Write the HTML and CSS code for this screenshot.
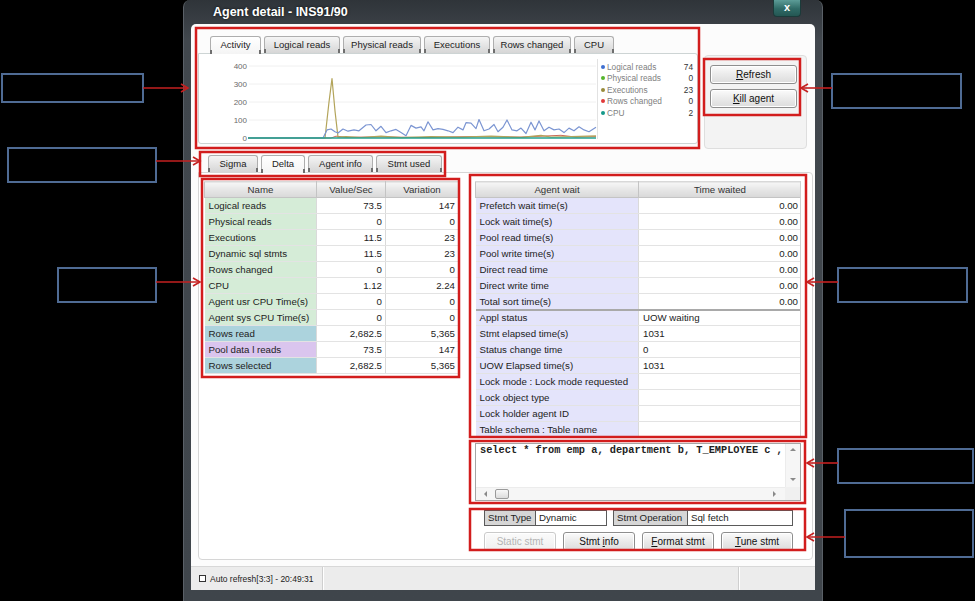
FILE: index.html
```html
<!DOCTYPE html>
<html>
<head>
<meta charset="utf-8">
<title>Agent detail</title>
<link rel="stylesheet" href="styles.css">
</head>
<body>
<div class="stage">
  <div class="window">
    <div class="titlebar">
      <span class="title">Agent detail - INS91/90</span>
      <span class="close">x</span>
    </div>
    <div class="client">
      <div class="top">
        <div class="chartgroup">
          <div class="tabs tabs-top">
            <span class="tab active w-activity">Activity</span>
            <span class="tab w-logical">Logical reads</span>
            <span class="tab w-physical">Physical reads</span>
            <span class="tab w-exec">Executions</span>
            <span class="tab w-rows">Rows changed</span>
            <span class="tab w-cpu">CPU</span>
          </div>
          <div class="chartpanel">
            <svg class="chart" width="398" height="89" viewBox="1 1 398 89">
              <g class="grid-lines">
                <line x1="51" y1="13" x2="398" y2="13"/>
                <line x1="51" y1="31" x2="398" y2="31"/>
                <line x1="51" y1="49" x2="398" y2="49"/>
                <line x1="51" y1="67" x2="398" y2="67"/>
              </g>
              <g class="axis">
                <text x="49" y="16">400</text>
                <text x="49" y="34">300</text>
                <text x="49" y="52">200</text>
                <text x="49" y="70">100</text>
                <text x="49" y="88">0</text>
              </g>
              <polyline class="s-red" points="50,85 133,85 138,83.2 148,84.3 183,83.9 223,84.5 273,83.6 323,84.1 363,82.3 378,84.1 398,83.6"/>
              <polyline class="s-olive" points="50,85 127,85 131,49 134,25.6 137,58 140,84.1 148,83.6 163,84.5 183,83.2 203,84.6 233,83.6 263,84.1 293,83.2 323,84.3 343,82.3 353,84.1 373,83.6 398,82.8"/>
              <polyline class="s-blue" points="50,85 125,85 129,76.9 133,76 137,78.7 140,80 145,76 150,78.2 156,76.9 161,77.8 168,72 173,71.5 178,77.8 183,73.3 188,79.6 193,77.8 198,76.4 203,79.6 208,82.8 213,72.4 218,75.1 223,73.8 226,77.8 230,68.8 235,76.9 240,75.6 245,76.4 250,77.8 255,79.6 260,74.2 265,76.9 268,69.7 273,70.2 278,75.6 281,66.5 286,77.8 291,76 296,71.5 300,78.7 305,74.2 309,67 314,76.9 319,77.8 323,75.1 328,80.5 333,69.2 337,76.9 341,67.9 346,77.8 351,74.2 356,76.9 361,76 366,79.6 371,75.1 376,77.8 381,73.8 386,76.9 391,78.7 398,74.2"/>
              <polyline class="s-teal" points="50,85 398,85"/>
            </svg>
            <div class="legend">
              <div class="lg"><span class="dot d-blue"></span><span class="lg-name">Logical reads</span><span class="lg-val">74</span></div>
              <div class="lg"><span class="dot d-green"></span><span class="lg-name">Physical reads</span><span class="lg-val">0</span></div>
              <div class="lg"><span class="dot d-olive"></span><span class="lg-name">Executions</span><span class="lg-val">23</span></div>
              <div class="lg"><span class="dot d-red"></span><span class="lg-name">Rows changed</span><span class="lg-val">0</span></div>
              <div class="lg"><span class="dot d-teal"></span><span class="lg-name">CPU</span><span class="lg-val">2</span></div>
            </div>
          </div>
        </div>
        <div class="btnpanel">
          <button class="btn"><u>R</u>efresh</button>
          <button class="btn"><u>K</u>ill agent</button>
        </div>
      </div>

      <div class="tabs tabs-sub">
        <span class="tab w-sigma">Sigma</span>
        <span class="tab active w-delta">Delta</span>
        <span class="tab w-agent">Agent info</span>
        <span class="tab w-stmt">Stmt used</span>
      </div>

      <div class="tabpage">
        <div class="leftcol">
          <table class="grid grid-left">
            <colgroup><col class="c1"><col class="c2"><col class="c3"></colgroup>
            <thead><tr><th>Name</th><th>Value/Sec</th><th>Variation</th></tr></thead>
            <tbody>
              <tr><td class="nm g">Logical reads</td><td class="num">73.5</td><td class="num">147</td></tr>
              <tr><td class="nm g">Physical reads</td><td class="num">0</td><td class="num">0</td></tr>
              <tr><td class="nm g">Executions</td><td class="num">11.5</td><td class="num">23</td></tr>
              <tr><td class="nm g">Dynamic sql stmts</td><td class="num">11.5</td><td class="num">23</td></tr>
              <tr><td class="nm g">Rows changed</td><td class="num">0</td><td class="num">0</td></tr>
              <tr><td class="nm g">CPU</td><td class="num">1.12</td><td class="num">2.24</td></tr>
              <tr><td class="nm g">Agent usr CPU Time(s)</td><td class="num">0</td><td class="num">0</td></tr>
              <tr><td class="nm g">Agent sys CPU Time(s)</td><td class="num">0</td><td class="num">0</td></tr>
              <tr><td class="nm b">Rows read</td><td class="num">2,682.5</td><td class="num">5,365</td></tr>
              <tr><td class="nm p">Pool data l reads</td><td class="num">73.5</td><td class="num">147</td></tr>
              <tr><td class="nm b">Rows selected</td><td class="num">2,682.5</td><td class="num">5,365</td></tr>
            </tbody>
          </table>
        </div>
        <div class="rightcol">
          <div class="waitbox">
            <table class="grid grid-right">
              <colgroup><col class="r1"><col class="r2"></colgroup>
              <thead><tr><th>Agent wait</th><th>Time waited</th></tr></thead>
              <tbody>
                <tr><td class="nm l">Prefetch wait time(s)</td><td class="num">0.00</td></tr>
                <tr><td class="nm l">Lock wait time(s)</td><td class="num">0.00</td></tr>
                <tr><td class="nm l">Pool read time(s)</td><td class="num">0.00</td></tr>
                <tr><td class="nm l">Pool write time(s)</td><td class="num">0.00</td></tr>
                <tr><td class="nm l">Direct read time</td><td class="num">0.00</td></tr>
                <tr><td class="nm l">Direct write time</td><td class="num">0.00</td></tr>
                <tr class="sep"><td class="nm l">Total sort time(s)</td><td class="num">0.00</td></tr>
                <tr><td class="nm l">Appl status</td><td class="txt">UOW waiting</td></tr>
                <tr><td class="nm l">Stmt elapsed time(s)</td><td class="txt">1031</td></tr>
                <tr><td class="nm l">Status change time</td><td class="txt">0</td></tr>
                <tr><td class="nm l">UOW Elapsed time(s)</td><td class="txt">1031</td></tr>
                <tr><td class="nm l">Lock mode : Lock mode requested</td><td class="txt"></td></tr>
                <tr><td class="nm l">Lock object type</td><td class="txt"></td></tr>
                <tr><td class="nm l">Lock holder agent ID</td><td class="txt"></td></tr>
                <tr><td class="nm l">Table schema : Table name</td><td class="txt"></td></tr>
              </tbody>
            </table>
          </div>
          <div class="sqlbox">
            <div class="sqlmain">
              <div class="sqltext">select * from emp a, department b, T_EMPLOYEE c , d</div>
              <div class="vscroll">
                <span class="arr up"></span>
                <span class="arr down"></span>
              </div>
            </div>
            <div class="hscroll">
              <span class="arr left"></span>
              <span class="thumb"></span>
              <span class="arr right"></span>
              <span class="corner"></span>
            </div>
          </div>
          <div class="stmtbox">
            <div class="fields">
              <span class="flabel">Stmt Type</span><span class="fvalue fv1">Dynamic</span>
              <span class="flabel fl2">Stmt Operation</span><span class="fvalue fv2">Sql fetch</span>
            </div>
            <div class="stmtbtns">
              <button class="btn sbtn disabled">Static stmt</button>
              <button class="btn sbtn">Stmt <u>i</u>nfo</button>
              <button class="btn sbtn"><u>F</u>ormat stmt</button>
              <button class="btn sbtn"><u>T</u>une stmt</button>
            </div>
          </div>
        </div>
      </div>

      <div class="statusbar">
        <div class="sb-cell sb-first"><span class="chk"></span>Auto refresh[3:3] - 20:49:31</div>
        <div class="sb-cell sb-mid"></div>
        <div class="sb-cell sb-last"></div>
      </div>
    </div>
  </div>

  <svg class="annot" width="975" height="601" viewBox="0 0 975 601">
    <g class="blue-box">
      <rect x="2" y="74" width="141" height="28"/>
      <rect x="8" y="148" width="148" height="34"/>
      <rect x="58" y="268" width="98" height="34"/>
      <rect x="832" y="74" width="129" height="34"/>
      <rect x="838" y="268" width="129" height="34"/>
      <rect x="838" y="449" width="135" height="34"/>
      <rect x="845" y="510" width="128" height="47"/>
    </g>
    <g class="red-box">
      <rect x="196" y="28" width="503" height="120"/>
      <rect x="704" y="59" width="96" height="56"/>
      <rect x="200" y="152" width="245" height="24"/>
      <rect x="202" y="179" width="257" height="198"/>
      <rect x="470" y="175" width="336" height="262"/>
      <rect x="470" y="441" width="335" height="62"/>
      <rect x="470" y="509" width="335" height="41"/>
    </g>
    <g class="arrow">
      <line x1="143" y1="88" x2="188" y2="88"/><polyline points="181,84 188,88 181,92"/>
      <line x1="156" y1="161" x2="200" y2="161"/><polyline points="193,157 200,161 193,165"/>
      <line x1="156" y1="282" x2="200" y2="282"/><polyline points="193,278 200,282 193,286"/>
      <line x1="832" y1="88" x2="801" y2="88"/><polyline points="808,84 801,88 808,92"/>
      <line x1="838" y1="282" x2="807" y2="282"/><polyline points="814,278 807,282 814,286"/>
      <line x1="838" y1="463" x2="807" y2="463"/><polyline points="814,459 807,463 814,467"/>
      <line x1="845" y1="537" x2="807" y2="537"/><polyline points="814,533 807,537 814,541"/>
    </g>
  </svg>
</div>
</body>
</html>
```

FILE: styles.css
```css
* { box-sizing: border-box; }

body {
  margin: 0;
  background: #000;
  font-family: "Liberation Sans", Arial, sans-serif;
  color: #222;
}

.stage {
  position: relative;
  width: 975px;
  height: 601px;
  overflow: hidden;
}

/* ---------- window frame ---------- */
.window {
  margin-left: 183px;
  width: 640px;
  height: 601px;
  padding: 0 7px;
  background: linear-gradient(#2f3439, #41474d 40px, #3f454b);
  border-left: 1px solid #5a6067;
  border-right: 1px solid #5a6067;
  border-radius: 7px 7px 0 0;
  display: flex;
  flex-direction: column;
}

.titlebar {
  height: 24px;
  display: flex;
  align-items: flex-start;
}

.title {
  margin: 5px 0 0 22px;
  color: #fff;
  font-weight: bold;
  font-size: 12.5px;
  line-height: 15px;
  text-shadow: 0 0 3px rgba(0, 0, 0, 0.8);
}

.close {
  margin-left: auto;
  margin-right: 14px;
  width: 28px;
  height: 17px;
  background: linear-gradient(#5c9c97, #2f6a66 55%, #245753);
  border: 1px solid #1b3b3a;
  border-top: none;
  border-radius: 0 0 4px 4px;
  color: #fff;
  font-weight: bold;
  font-size: 11px;
  line-height: 14px;
  text-align: center;
}

.client {
  height: 566px;
  background: #fcfcfc;
  border-radius: 5px 5px 0 0;
  display: flex;
  flex-direction: column;
}

/* ---------- top section ---------- */
.top {
  display: flex;
  align-items: flex-start;
  height: 121px;
  padding: 12px 0 0 7px;
}

.chartgroup {
  width: 500px;
  display: flex;
  flex-direction: column;
}

.tabs {
  display: flex;
  gap: 3px;
  height: 17px;
  flex: none;
  position: relative;
  z-index: 1;
}

.tabs-top { padding-left: 12px; }

.tab {
  position: relative;
  height: 17px;
  background: linear-gradient(#f5f5f5, #e2e2e2 60%, #d6d6d6);
  border: 1px solid #aeaeae;
  border-bottom: none;
  border-radius: 3px 3px 0 0;
  font-size: 9.5px;
  line-height: 16px;
  text-align: center;
  color: #222;
}

.tab::before,
.tab::after {
  content: "";
  position: absolute;
  bottom: 0;
  width: 2px;
  height: 4px;
  background: #6e6e6e;
}
.tab::before { left: -1px; }
.tab::after { right: -1px; }

.tab.active {
  background: linear-gradient(#ffffff, #f4f4f4);
  height: 18px;
  margin-bottom: -1px;
}

.w-activity { width: 51px; }
.w-logical { width: 76px; }
.w-physical { width: 78px; }
.w-exec { width: 66px; }
.w-rows { width: 78px; }
.w-cpu { width: 40px; }

.chartpanel {
  height: 91px;
  background: #fff;
  border: 1px solid #cdd4d4;
  border-radius: 0 3px 3px 3px;
  display: flex;
}

.chart { display: block; flex: none; }

.grid-lines line { stroke: #f0f0f0; stroke-width: 1; }
.axis text {
  font-family: "Liberation Sans", Arial, sans-serif;
  font-size: 8px;
  fill: #6a6a6a;
  text-anchor: end;
}

.chart polyline { fill: none; stroke-linejoin: round; }
.s-blue { stroke: #7b95d2; stroke-width: 1.2; }
.s-olive { stroke: #b3a45a; stroke-width: 1.2; }
.s-red { stroke: #c96a55; stroke-width: 1; }
.s-teal { stroke: #23a08f; stroke-width: 1.3; }

.legend {
  flex: 1;
  border-left: 1px solid #e2e2e2;
  padding: 2px 4px 0 3px;
  margin: 5px 0 4px 0;
}

.lg {
  display: flex;
  align-items: center;
  height: 11.5px;
  font-size: 8.3px;
}

.dot {
  width: 4px;
  height: 4px;
  border-radius: 50%;
  margin-right: 2px;
  flex: none;
}
.d-blue { background: #3f6fd0; }
.d-green { background: #54b52c; }
.d-olive { background: #988b3a; }
.d-red { background: #e03a3a; }
.d-teal { background: #15998a; }

.lg-name { color: #808080; }
.lg-val { margin-left: auto; color: #333; }

.btnpanel {
  width: 103px;
  height: 94px;
  margin: 19px 0 0 6px;
  background: #f3f3f3;
  border: 1px solid #dedede;
  border-radius: 4px;
  padding: 9px 0 0 5px;
  display: flex;
  flex-direction: column;
  gap: 5px;
  flex: none;
}

.btn {
  font-family: "Liberation Sans", Arial, sans-serif;
  font-size: 10px;
  color: #111;
  background: linear-gradient(#fbfbfb, #ececec 45%, #dcdcdc);
  border: 1px solid #8e8e8e;
  border-radius: 3px;
  padding: 0;
  margin: 0;
  box-shadow: inset 0 0 0 1px #fff;
}

.btnpanel .btn {
  width: 87px;
  height: 19px;
}

/* ---------- sub tabs ---------- */
.tabs-sub {
  margin: 10px 0 0 0;
  padding-left: 17px;
}

.w-sigma { width: 50px; }
.w-delta { width: 44px; }
.w-agent { width: 65px; }
.w-stmt { width: 66px; }

/* ---------- tab page ---------- */
.tabpage {
  margin-left: 7px;
  width: 615px;
  height: 388px;
  flex: none;
  background: #fff;
  border: 1px solid #d6d6d6;
  border-radius: 0 4px 4px 4px;
  padding: 8px 0 0 5px;
  display: flex;
  gap: 17px;
}

.leftcol { width: 254px; }
.rightcol { width: 326px; display: flex; flex-direction: column; }

.grid {
  border-collapse: collapse;
  table-layout: fixed;
  font-size: 9.7px;
  width: 100%;
}

.grid th {
  height: 16px;
  padding: 0;
  font-weight: normal;
  color: #333;
  background: linear-gradient(#f6f6f6, #e6e6e6 50%, #d8d8d8);
  border: 1px solid #c4c4c4;
  border-top-color: #d8d8d8;
  text-align: center;
}

.grid td {
  height: 16px;
  padding: 0 4px;
  border-bottom: 1px solid #e3e3e3;
  border-right: 1px solid #dadada;
  white-space: nowrap;
  overflow: hidden;
  color: #222;
}

.grid td.num { text-align: right; padding-right: 3px; }
.grid td.txt { text-align: left; }

.grid-left .c1 { width: 112px; }
.grid-left .c2 { width: 69px; }
.grid-left .c3 { width: 73px; }

.nm.g { background: #d5ecd7; }
.nm.b { background: #acd3dd; }
.nm.p { background: #dac5ee; }
.nm.l { background: #e4e4fb; }

.grid-right .r1 { width: 163px; }
.grid-right .r2 { width: 163px; }

.grid-right tr.sep td { border-bottom: 2px solid #a9a9a9; }

.waitbox {
  height: 256px;
  flex: none;
  overflow: hidden;
  border-right: 1px solid #d0d0d0;
}

/* ---------- sql box ---------- */
.sqlbox {
  margin-top: 6px;
  height: 58px;
  flex: none;
  border: 1px solid #a5a5a5;
  background: #fff;
  display: flex;
  flex-direction: column;
}

.sqlmain {
  flex: 1;
  display: flex;
  overflow: hidden;
}

.sqltext {
  flex: 1;
  overflow: hidden;
  white-space: nowrap;
  font-family: "Liberation Mono", "Courier New", monospace;
  font-weight: bold;
  font-size: 10.3px;
  line-height: 12px;
  padding: 0 0 0 4px;
  color: #222;
}

.vscroll {
  width: 15px;
  background: #f6f6f6;
  border-left: 1px solid #ececec;
  position: relative;
}

.hscroll {
  height: 13px;
  background: #f6f6f6;
  border-top: 1px solid #ececec;
  position: relative;
}

.arr {
  position: absolute;
  width: 0;
  height: 0;
  border: 3px solid transparent;
}
.arr.up { top: 4px; left: 4px; border-bottom: 3px solid #8a8a8a; border-top-width: 0; }
.arr.down { bottom: 6px; left: 4px; border-top: 3px solid #8a8a8a; border-bottom-width: 0; }
.arr.left { top: 3px; left: 8px; border-right: 3px solid #8a8a8a; border-left-width: 0; }
.arr.right { top: 3px; right: 24px; border-left: 3px solid #8a8a8a; border-right-width: 0; }

.thumb {
  position: absolute;
  left: 19px;
  top: 1px;
  width: 14px;
  height: 10px;
  background: linear-gradient(#f8f8f8, #dcdcdc);
  border: 1px solid #9a9a9a;
  border-radius: 2px;
}

.corner {
  position: absolute;
  right: 0;
  top: -1px;
  width: 15px;
  height: 13px;
  background: #f0f0f0;
}

/* ---------- stmt box ---------- */
.stmtbox {
  padding: 9px 0 0 9px;
}

.fields {
  display: flex;
  height: 16px;
  font-size: 9.7px;
}

.flabel {
  background: #d6d6d6;
  border: 1px solid #5a5a5a;
  line-height: 14px;
  padding: 0 3px;
  color: #222;
}

.fvalue {
  background: #fff;
  border: 1px solid #5a5a5a;
  border-left: none;
  line-height: 14px;
  padding: 0 3px;
}

.flabel { width: 52px; }
.fv1 { width: 71px; }
.fl2 { width: 75px; margin-left: 6px; }
.fv2 { width: 105px; }

.stmtbtns {
  display: flex;
  gap: 7px;
  margin-top: 6px;
}

.sbtn {
  width: 72px;
  height: 19px;
}

.sbtn.disabled {
  color: #b4b4b4;
  border-color: #cacaca;
  background: linear-gradient(#fbfbfb, #efefef);
}

/* ---------- status bar ---------- */
.statusbar {
  margin-top: 6px;
  height: 24px;
  flex: none;
  background: #ececec;
  border-top: 1px solid #d8d8d8;
  display: flex;
  font-size: 8.5px;
}

.sb-cell {
  display: flex;
  align-items: center;
  border-right: 1px solid #cfcfcf;
  box-shadow: 1px 0 0 #fff;
}

.sb-first { width: 132px; padding-left: 8px; }
.sb-mid { width: 416px; }
.sb-last { flex: 1; border-right: none; box-shadow: none; }

.chk {
  width: 7px;
  height: 7px;
  border: 1px solid #333;
  background: #fff;
  margin-right: 4px;
}

/* ---------- annotations ---------- */
.annot {
  position: absolute;
  left: 0;
  top: 0;
  pointer-events: none;
}

.blue-box rect { fill: none; stroke: #4f6b94; stroke-width: 2; }
.red-box rect { fill: none; stroke: #d21d1d; stroke-width: 2.5; }
.arrow line,
.arrow polyline { fill: none; stroke: #c42020; stroke-width: 1.6; }
```
